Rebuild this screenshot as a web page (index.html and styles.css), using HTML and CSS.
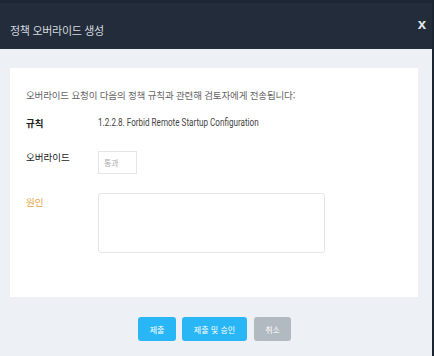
FILE: index.html
```html
<!DOCTYPE html>
<html lang="ko">
<head>
    <meta charset="UTF-8">
    <meta name="viewport" content="width=device-width, initial-scale=1.0">
    <title>정책 오버라이드 생성</title>
    <link rel="stylesheet" href="styles.css">
</head>
<body>
    <div class="modal">
        <div class="modal-header">
            <h1>정책 오버라이드 생성</h1>
            <button class="close-button">x</button>
        </div>

        <div class="modal-body">
            <div class="panel">
                <p class="intro">오버라이드 요청이 다음의 정책 규칙과 관련해 검토자에게 전송됩니다:</p>
                <div class="form-row rule-row">
                    <span class="label">규칙</span>
                    <span class="rule-value">1.2.2.8. Forbid Remote Startup Configuration</span>
                </div>
                <div class="form-row override-row">
                    <span class="label">오버라이드</span>
                    <input type="text" class="override-input" placeholder="통과">
                </div>
                <div class="form-row reason-row">
                    <span class="label required">원인</span>
                    <textarea class="reason-input"></textarea>
                </div>
            </div>

            <div class="modal-footer">
                <button class="btn btn-primary">제출</button>
                <button class="btn btn-primary btn-wide">제출 및 승인</button>
                <button class="btn btn-cancel">취소</button>
            </div>
        </div>
    </div>
</body>
</html>
```

FILE: styles.css
```css
body {
    margin: 0;
    padding: 0;
    background: #1b2431;
    font-family: 'Noto Sans CJK KR', 'Noto Sans', sans-serif;
}

.modal {
    width: 432px;
    height: 356px;
    background: #edf0f5;
    display: flex;
    flex-direction: column;
}

.modal-header {
    height: 49px;
    box-sizing: border-box;
    background: #222c3b;
    border-top: 3px solid #1d2634;
    display: flex;
    justify-content: space-between;
    align-items: flex-start;
    padding: 16px 6px 0 10px;
}

.modal-header h1 {
    margin: 0;
    font-size: 11px;
    line-height: 22px;
    font-weight: 400;
    letter-spacing: -0.3px;
    color: #d3d8de;
}

.close-button {
    background: none;
    border: none;
    padding: 0;
    margin-top: -3px;
    font-family: 'Liberation Sans', sans-serif;
    font-size: 15px;
    font-weight: 700;
    line-height: 16px;
    color: #e6e8eb;
    cursor: pointer;
}

.modal-body {
    padding: 19px 14px 0 10px;
}

.panel {
    background: white;
    height: 229px;
    box-sizing: border-box;
    padding: 19px 16px 0 16px;
}

.intro {
    margin: 0;
    font-size: 9.5px;
    line-height: 16px;
    letter-spacing: -0.15px;
    color: #666;
}

.form-row {
    display: flex;
    align-items: flex-start;
}

.label {
    width: 72px;
    flex-shrink: 0;
    font-size: 9.5px;
    line-height: 16px;
    color: #222;
}

.required {
    color: #e9a23d;
}

.rule-row {
    margin-top: 12px;
}

.rule-row .label {
    font-weight: 700;
}

.rule-value {
    display: inline-block;
    font-family: 'Roboto', sans-serif;
    font-size: 10px;
    line-height: 16px;
    color: #444;
    white-space: nowrap;
    transform: scaleX(0.81);
    transform-origin: left center;
}

.override-row {
    margin-top: 18px;
}

.override-input {
    width: 39px;
    height: 23px;
    box-sizing: border-box;
    margin-top: 2px;
    border: 1px solid #e6e6e6;
    padding: 0 5px;
    font-family: 'Noto Sans CJK KR', sans-serif;
    font-size: 8px;
    outline: none;
}

.override-input::placeholder {
    color: #aaa;
}

.reason-row {
    margin-top: 19px;
}

.reason-row .label {
    margin-top: 1px;
}

.reason-input {
    width: 227px;
    height: 60px;
    box-sizing: border-box;
    border: 1px solid #e6e6e6;
    border-radius: 3px;
    resize: none;
    outline: none;
}

.modal-footer {
    display: flex;
    gap: 6px;
    padding-left: 128px;
    margin-top: 20px;
}

.btn {
    height: 24px;
    width: 38px;
    border: none;
    border-radius: 3px;
    color: white;
    font-family: 'Noto Sans CJK KR', sans-serif;
    font-size: 8px;
    padding: 0;
    cursor: pointer;
}

.btn-primary {
    background: #29b6f6;
}

.btn-wide {
    width: 65px;
}

.btn-cancel {
    background: #b1b9c1;
    width: 37px;
    margin-left: 1px;
}
```
